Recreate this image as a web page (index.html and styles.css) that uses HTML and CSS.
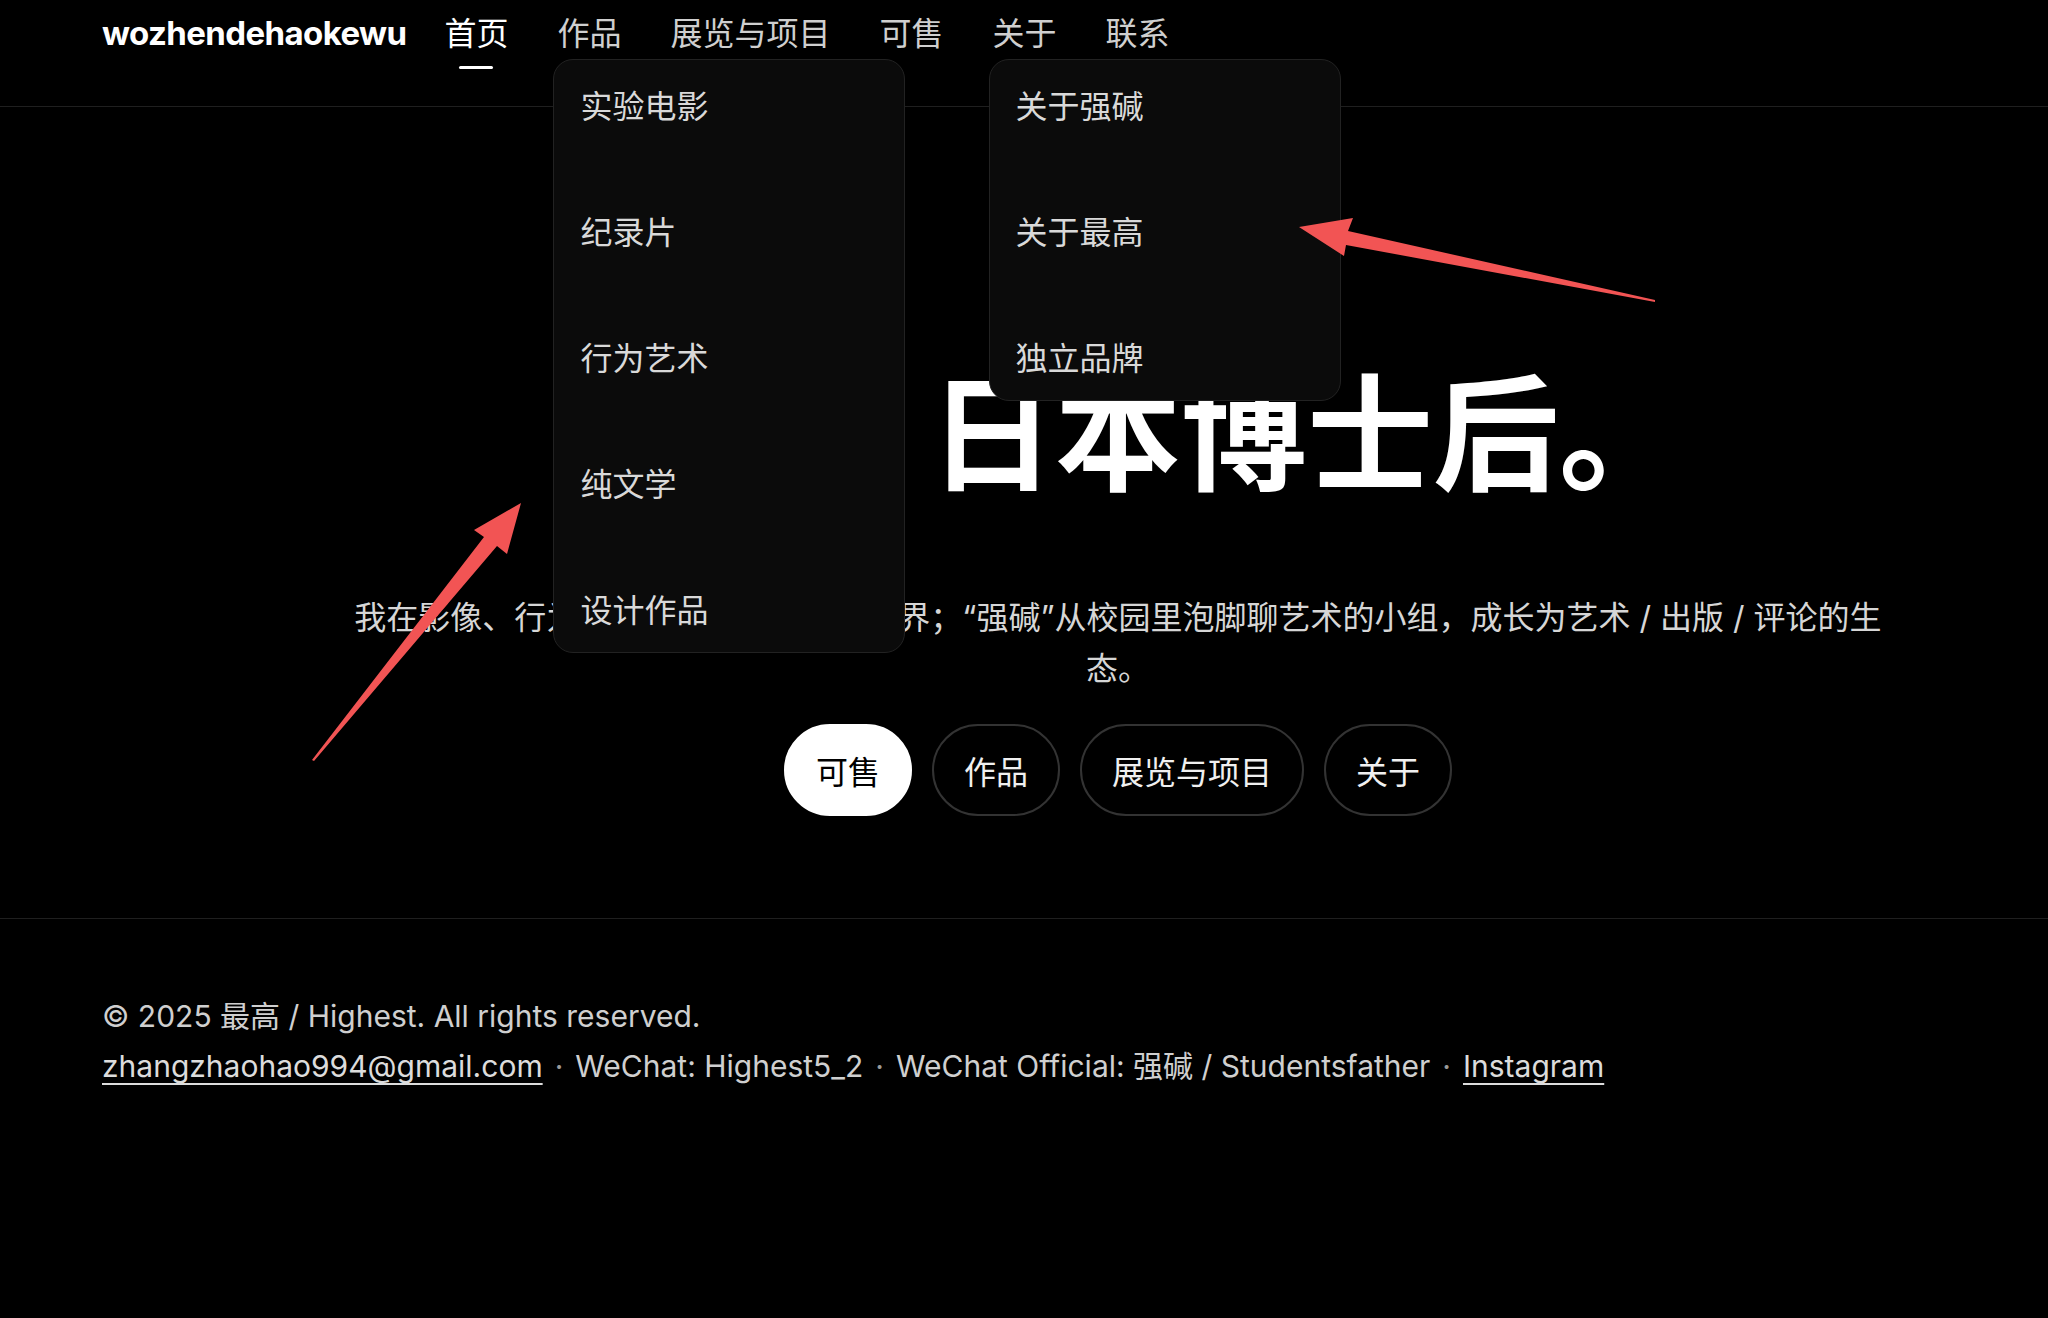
FILE: index.html
```html
<!DOCTYPE html>
<html lang="zh-CN">
<head>
    <meta charset="UTF-8">
    <meta name="viewport" content="width=device-width, initial-scale=1.0">
    <title>最高 / Highest</title>
    <link rel="stylesheet" href="styles.css">
</head>
<body>

    <!-- Top bar -->
    <header class="site-header">
        <a class="logo" href="#">wozhendehaokewu</a>
        <nav class="main-nav">
            <div class="nav-item active"><a href="#">首页</a></div>
            <div class="nav-item">
                <a href="#">作品</a>
                <div class="dropdown">
                    <a href="#">实验电影</a>
                    <a href="#">纪录片</a>
                    <a href="#">行为艺术</a>
                    <a href="#">纯文学</a>
                    <a href="#">设计作品</a>
                </div>
            </div>
            <div class="nav-item"><a href="#">展览与项目</a></div>
            <div class="nav-item"><a href="#">可售</a></div>
            <div class="nav-item">
                <a href="#">关于</a>
                <div class="dropdown">
                    <a href="#">关于强碱</a>
                    <a href="#">关于最高</a>
                    <a href="#">独立品牌</a>
                </div>
            </div>
            <div class="nav-item"><a href="#">联系</a></div>
        </nav>
    </header>

    <!-- Hero -->
    <main class="hero">
        <h1 class="hero-title">最高，日本博士后。</h1>
        <p class="hero-text">我在影像、行为、文学与设计间探索世界；“强碱”从校园里泡脚聊艺术的小组，成长为艺术 / 出版 / 评论的生态。</p>
        <div class="hero-links">
            <a class="pill primary" href="#">可售</a>
            <a class="pill" href="#">作品</a>
            <a class="pill" href="#">展览与项目</a>
            <a class="pill" href="#">关于</a>
        </div>
    </main>

    <!-- Footer -->
    <footer class="site-footer">
        <p>© 2025 最高 / Highest. All rights reserved.</p>
        <p>
            <a href="#">zhangzhaohao994@gmail.com</a><span class="sep">·</span>WeChat: Highest5_2<span class="sep">·</span>WeChat Official: 强碱 / Studentsfather<span class="sep">·</span><a href="#">Instagram</a>
        </p>
    </footer>

    <!-- Red annotation arrows drawn over the page -->
    <svg class="annotations" width="2048" height="1318" viewBox="0 0 2048 1318">
        <polygon points="312,760 314,761 497,546 507,554 521,503 474,530 484,537" />
        <polygon points="1655,300 1348,231 1353,218 1299,227 1344,256 1346,245 1655,302" />
    </svg>

</body>
</html>
```

FILE: styles.css
```css
/* Base */
body {
    margin: 0;
    background-color: #000;
    color: #fff;
    font-family: "Inter", "Noto Sans CJK SC", sans-serif;
    position: relative;
    min-height: 1318px;
}

a {
    color: inherit;
    text-decoration: none;
}

/* Header */
.site-header {
    height: 107px;
    box-sizing: border-box;
    border-bottom: 1px solid #1f1f1f;
    display: flex;
    align-items: flex-start;
    padding: 7px 0 0 102px;
}

.logo {
    font-size: 33px;
    font-weight: 700;
    line-height: 48px;
    letter-spacing: -0.6px;
    color: #fff;
    margin: 2px 38px 0 0;
}

.main-nav {
    display: flex;
    gap: 49px;
}

.nav-item {
    position: relative;
    font-family: "Noto Sans CJK SC", sans-serif;
    font-size: 32px;
    line-height: 48px;
    color: #cfcfcf;
}

.nav-item.active {
    color: #fff;
}

.nav-item.active::after {
    content: "";
    position: absolute;
    top: 59px;
    left: 15px;
    width: 34px;
    height: 3px;
    border-radius: 2px;
    background-color: #fff;
}

/* Open dropdown menus */
.dropdown {
    position: absolute;
    top: 52px;
    left: -4px;
    width: 352px;
    box-sizing: border-box;
    padding: 8px 0;
    display: flex;
    flex-direction: column;
    gap: 54px;
    background-color: #0b0b0b;
    border: 1px solid #222;
    border-radius: 20px;
    z-index: 10;
}

.dropdown a {
    display: block;
    padding: 0 26px;
    line-height: 72px;
    font-size: 32px;
    color: #d9d9d9;
}

/* Hero */
.hero {
    padding: 244px 0 102px 188px;
    text-align: center;
}

.hero-title {
    margin: 0 0 90px;
    font-family: "Noto Sans CJK SC", sans-serif;
    font-size: 126px;
    line-height: 151px;
    font-weight: 700;
    color: #fff;
}

.hero-text {
    max-width: 1535px;
    margin: 0 auto 30px;
    font-size: 32px;
    line-height: 51px;
    color: #d6d6d6;
}

.hero-links {
    display: flex;
    justify-content: center;
    gap: 20px;
}

.pill {
    font-family: "Noto Sans CJK SC", sans-serif;
    font-size: 32px;
    line-height: 48px;
    padding: 20px 30px;
    border: 2px solid #333;
    border-radius: 999px;
    color: #f0f0f0;
}

.pill.primary {
    background-color: #fff;
    border-color: #fff;
    color: #000;
}

/* Footer */
.site-footer {
    border-top: 1px solid #1f1f1f;
    padding: 72px 102px;
    font-size: 30px;
    line-height: 50px;
    color: #cfcfcf;
}

.site-footer p {
    margin: 0;
}

.site-footer a {
    text-decoration: underline;
    text-underline-offset: 6px;
    text-decoration-thickness: 2px;
    color: #dcdcdc;
}

.sep {
    margin: 0 12px;
    color: #9a9a9a;
}

/* Annotation overlay */
.annotations {
    position: absolute;
    top: 0;
    left: 0;
    pointer-events: none;
    z-index: 20;
}

.annotations polygon {
    fill: #f25454;
}
```
